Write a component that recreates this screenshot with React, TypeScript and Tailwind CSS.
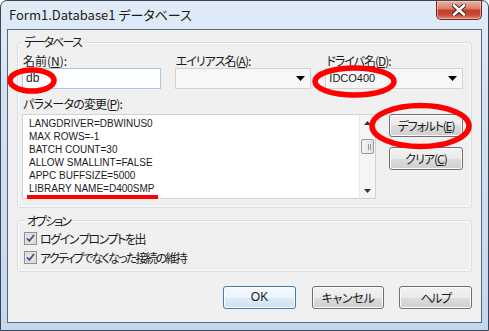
import React from "react";

const jp = "font-['Noto_Sans_CJK_JP','Liberation_Sans',sans-serif] [font-feature-settings:'palt']";

function Btn({ children, className = "", def = false }: { children: React.ReactNode; className?: string; def?: boolean }) {
  return (
    <div
      className={
        "flex items-center justify-center rounded-[3px] border text-[12px] leading-[15px] text-[#1a1a1a] " +
        (def
          ? "border-[#3c7fb1] bg-[linear-gradient(#f4f9fd_0%,#ecf5fc_50%,#dcebf7_50%,#cfe3f4_100%)] shadow-[inset_0_0_0_1px_#ffffff] "
          : "border-[#707070] bg-[linear-gradient(#f2f2f2_0%,#ebebeb_50%,#dddddd_50%,#cfcfcf_100%)] shadow-[inset_0_0_0_1px_#fbfbfb] ") +
        className
      }
    >
      {children}
    </div>
  );
}

function Arrow() {
  return (
    <svg width="9" height="5" viewBox="0 0 9 5" className="shrink-0">
      <path d="M0 0 H9 L4.5 5 Z" fill="#000" />
    </svg>
  );
}

function Check() {
  return (
    <svg width="13" height="13" viewBox="0 0 13 13" className="shrink-0">
      <rect x="0.5" y="0.5" width="12" height="12" fill="#f4f4f4" stroke="#8e8f8f" />
      <rect x="2" y="2" width="9" height="9" fill="#e6e6e6" stroke="#c9c9c9" strokeWidth="0.8" />
      <path d="M3 6.3 L5.4 8.8 L10 3" fill="none" stroke="#41558f" strokeWidth="1.8" />
    </svg>
  );
}

export default function App() {
  const lines = [
    "LANGDRIVER=DBWINUS0",
    "MAX ROWS=-1",
    "BATCH COUNT=30",
    "ALLOW SMALLINT=FALSE",
    "APPC BUFFSIZE=5000",
    "LIBRARY NAME=D400SMP",
  ];
  return (
    <div className={"relative w-[489px] h-[331px] overflow-hidden bg-white " + jp}>
      <div className="flex flex-col w-full h-full rounded-t-[7px] border border-[#3b4654] bg-[linear-gradient(180deg,#e2ecf8_0%,#d2e2f3_30%,#c3d8ee_100%)]">
        <div className="flex h-[28px] items-start">
          <div className="pl-[8px] pt-[5px] text-[13px] leading-[17px] text-[#1b1b1b]">Form1.Database1 データベース</div>
          <div className="ml-auto mr-[6px] h-[19px] w-[46px] rounded-b-[5px] border border-t-0 border-[#6a2a22] bg-[linear-gradient(180deg,#eab0a2_0%,#dd8471_40%,#c4412b_52%,#c64632_75%,#de8a70_100%)] shadow-[inset_0_0_0_1px_rgba(255,220,210,0.5)] flex items-center justify-center">
            <svg width="14" height="12" viewBox="0 0 14 12">
              <path d="M2 1.5 L12 10.5 M12 1.5 L2 10.5" stroke="#3a2020" strokeWidth="4.4" strokeLinecap="square" />
              <path d="M2 1.5 L12 10.5 M12 1.5 L2 10.5" stroke="#ffffff" strokeWidth="2.6" strokeLinecap="square" />
            </svg>
          </div>
        </div>

        <div className="mx-[6px] mb-[7px] flex-1 border border-[#5b6775] bg-[#f0f0f0] px-[9px] pt-[12px] flex flex-col">
          {/* Database group */}
          <div className="relative rounded-[3px] border border-[#d5dfe5] shadow-[inset_0_0_0_1px_#fafafa] pl-[4px] pr-[8px] pt-[10px] pb-[8px]">
            <div className="absolute left-[4px] -top-[9px] px-[2px] bg-[#f0f0f0] text-[12px] leading-[15px] tracking-[-1.8px] text-[#1a1a1a]">データベース</div>
            <div className="flex gap-[14px] text-[12px] leading-[15px] text-[#1a1a1a]">
              <div className="flex flex-col w-[139px]">
                <div className="h-[15px] ml-[1px]">名前(<u>N</u>):</div>
                <div className="h-[21px] border border-[#a9c6e4] bg-white flex items-center pl-[3px] font-['Liberation_Sans',sans-serif] text-[12px]">db</div>
              </div>
              <div className="flex flex-col w-[137px]">
                <div className="h-[15px] ml-[1px] tracking-[-1px]">エイリアス名(<u>A</u>):</div>
                <div className="h-[21px] border border-[#d2d2d2] bg-[#f7f7f7] flex items-center justify-end pr-[5px]">
                  <Arrow />
                </div>
              </div>
              <div className="flex flex-col w-[138px]">
                <div className="h-[15px] ml-[1px] tracking-[-1px]">ドライバ名(<u>D</u>):</div>
                <div className="h-[21px] border border-[#d2d2d2] bg-[#f7f7f7] flex items-center pl-[3px] pr-[5px]">
                  <span className="font-['Liberation_Sans',sans-serif] text-[11px]">IDCO400</span>
                  <span className="ml-auto"><Arrow /></span>
                </div>
              </div>
            </div>
            <div className="mt-[7px] h-[15px] ml-[1px] text-[12px] leading-[15px] tracking-[-0.8px] text-[#1a1a1a]">パラメータの変更(<u>P</u>):</div>
            <div className="mt-[3px] flex gap-[13px]">
              <div className="relative flex h-[85px] w-[354px] border border-[#cfd3d8] bg-white">
                <div className="flex-1 pl-[6px] pt-[2px] font-['Liberation_Sans',sans-serif] text-[10px] leading-[13px] text-[#1a1a1a]">
                  {lines.map((l) => (
                    <div key={l}>{l}</div>
                  ))}
                </div>
                <div className="absolute left-[4px] top-[80px] h-[4px] w-[131px] bg-[#ff0000]" />
                <div className="flex w-[16px] flex-col items-center border-l border-dotted border-[#d6d6d6] bg-[#f5f5f5]">
                  <svg width="7" height="4" viewBox="0 0 7 4" className="mt-[6px]">
                    <path d="M0 4 H7 L3.5 0 Z" fill="#333" />
                  </svg>
                  <div className="mt-[14px] h-[15px] w-[13px] rounded-[2px] border border-[#9a9a9a] bg-[linear-gradient(90deg,#f4f4f4,#e2e2e2)] flex items-center justify-end pr-[2px]">
                    <div className="flex gap-[1px]">
                      <div className="h-[6px] w-[1px] bg-[#9a9a9a]" />
                      <div className="h-[6px] w-[1px] bg-[#9a9a9a]" />
                    </div>
                  </div>
                  <svg width="7" height="4" viewBox="0 0 7 4" className="mt-auto mb-[5px]">
                    <path d="M0 0 H7 L3.5 4 Z" fill="#333" />
                  </svg>
                </div>
              </div>
              <div className="flex flex-col gap-[10px] w-[74px]">
                <Btn className="h-[23px] tracking-[-1.2px]">デフォルト(<u>E</u>)</Btn>
                <Btn className="h-[23px] tracking-[-1px]">クリア(<u>C</u>)</Btn>
              </div>
            </div>
          </div>

          {/* Options group */}
          <div className="relative mt-[12px] h-[52px] rounded-[3px] border border-[#d5dfe5] shadow-[inset_0_0_0_1px_#fafafa] pl-[6px] pt-[8px]">
            <div className="absolute left-[7px] -top-[8px] px-[2px] bg-[#f0f0f0] text-[12px] leading-[15px] tracking-[-2px] text-[#1a1a1a]">オプション</div>
            <div className="flex h-[19px] items-center gap-[3px] text-[12px] leading-[15px] text-[#1a1a1a]">
              <Check />
              <span className="tracking-[-1.5px]">ログイン プロンプトを出</span>
            </div>
            <div className="flex h-[19px] items-center gap-[3px] text-[12px] leading-[15px] text-[#1a1a1a]">
              <Check />
              <span className="tracking-[-1.8px]">アクティブでなくなった接続の維持</span>
            </div>
          </div>

          {/* Bottom buttons */}
          <div className="mt-[14px] flex justify-end">
            <Btn def className="h-[23px] w-[73px] font-['Liberation_Sans',sans-serif] text-[11px]">OK</Btn>
            <Btn className="ml-[16px] h-[23px] w-[72px] tracking-[-0.3px]">キャンセル</Btn>
            <Btn className="ml-[15px] h-[23px] w-[73px] tracking-[-1.5px]">ヘルプ</Btn>
          </div>
        </div>
      </div>

      <svg className="pointer-events-none absolute inset-0" width="489" height="331" viewBox="0 0 489 331">
        <ellipse cx="32" cy="80.5" rx="22" ry="10.5" fill="none" stroke="#ff0000" strokeWidth="5.5" />
        <ellipse cx="354.5" cy="81.5" rx="39.5" ry="13.5" fill="none" stroke="#ff0000" strokeWidth="5.5" />
        <ellipse cx="420.5" cy="126" rx="48.5" ry="20.5" fill="none" stroke="#ff0000" strokeWidth="5.5" />
      </svg>
    </div>
  );
}
